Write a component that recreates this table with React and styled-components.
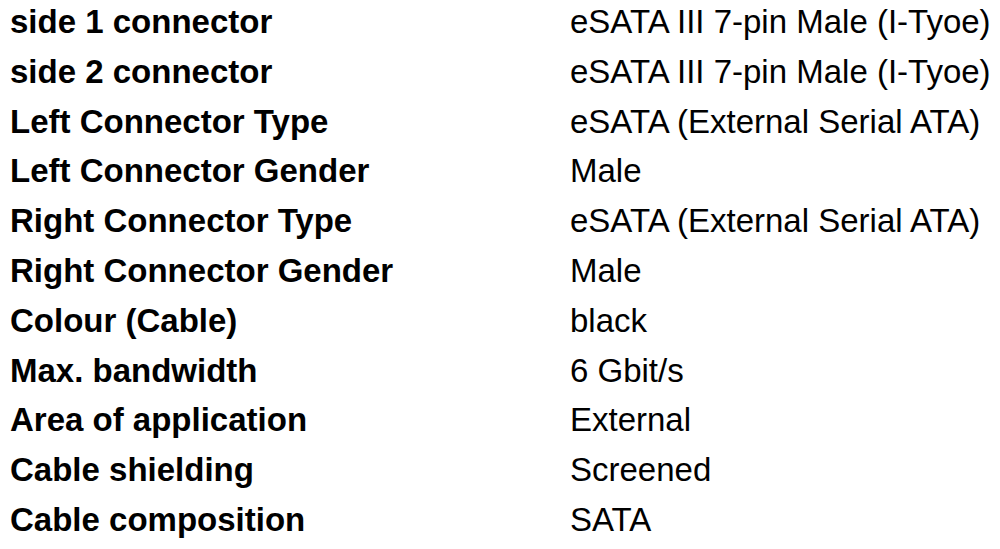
import styled, { createGlobalStyle } from 'styled-components'

const GlobalStyle = createGlobalStyle`
  html, body {
    margin: 0;
    padding: 0;
    background: #fff;
  }
`

const specs = [
  ['side 1 connector', 'eSATA III 7-pin Male (I-Tyoe)'],
  ['side 2 connector', 'eSATA III 7-pin Male (I-Tyoe)'],
  ['Left Connector Type', 'eSATA (External Serial ATA)'],
  ['Left Connector Gender', 'Male'],
  ['Right Connector Type', 'eSATA (External Serial ATA)'],
  ['Right Connector Gender', 'Male'],
  ['Colour (Cable)', 'black'],
  ['Max. bandwidth', '6 Gbit/s'],
  ['Area of application', 'External'],
  ['Cable shielding', 'Screened'],
  ['Cable composition', 'SATA'],
]

const Table = styled('div')`
  display: grid;
  grid-template-columns: 560px auto;
  row-gap: 5.8px;
  padding-left: 10px;
  font-family: "Liberation Sans", Arial, sans-serif;
  font-size: 33px;
  line-height: 44px;
  color: #000;
`

const Label = styled('div')`
  font-weight: bold;
  white-space: nowrap;
`

const Value = styled('div')`
  white-space: nowrap;
`

const App = () => (
  <>
    <GlobalStyle />
    <Table>
      {specs.map(([label, value]) => [
        <Label key={`${label}-l`}>{label}</Label>,
        <Value key={`${label}-v`}>{value}</Value>,
      ])}
    </Table>
  </>
)

export default App
